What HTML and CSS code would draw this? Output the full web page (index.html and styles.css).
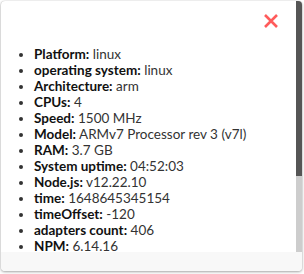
FILE: index.html
```html
<!DOCTYPE html>
<html>
<head>
<meta charset="utf-8">
<link rel="stylesheet" href="styles.css">
</head>
<body>
<div class="dialog">
  <div class="body">
    <div class="content">
      <div class="head">
        <button class="close" aria-label="close">
          <svg width="16" height="16" viewBox="0 0 16 16"><path d="M2 2L14 14M14 2L2 14" stroke="#ff5b5b" stroke-width="2.6" stroke-linecap="butt"/></svg>
        </button>
      </div>
      <ul class="info">
        <li><b>Platform:</b> linux</li>
        <li><b>operating system:</b> linux</li>
        <li><b>Architecture:</b> arm</li>
        <li><b>CPUs:</b> 4</li>
        <li><b>Speed:</b> 1500 MHz</li>
        <li><b>Model:</b> ARMv7 Processor rev 3 (v7l)</li>
        <li><b>RAM:</b> 3.7 GB</li>
        <li><b>System uptime:</b> 04:52:03</li>
        <li><b>Node.js:</b> v12.22.10</li>
        <li><b>time:</b> 1648645345154</li>
        <li><b>timeOffset:</b> -120</li>
        <li><b>adapters count:</b> 406</li>
        <li><b>NPM:</b> 6.14.16</li>
      </ul>
    </div>
    <div class="scrollbar"><div class="thumb"></div></div>
  </div>
  <div class="footer"></div>
</div>
</body>
</html>
```
FILE: styles.css
```css
html, body {
  margin: 0;
  padding: 0;
  background: #ffffff;
}
body {
  width: 304px;
  height: 274px;
  overflow: hidden;
  font-family: "Lato", "Noto Sans", sans-serif;
  font-size: 13.5px;
  color: #333;
}
.dialog {
  margin: 1px 0 0 1px;
  width: 301px;
  height: 270px;
  background: #fff;
  border-radius: 4px;
  box-shadow: 0 1px 3px rgba(0,0,0,0.35), 0 0 1px rgba(0,0,0,0.25);
  display: flex;
  flex-direction: column;
  overflow: hidden;
}
.body {
  position: relative;
  height: 251px;
  flex: none;
  overflow: hidden;
}
.content {
  height: 100%;
  overflow: hidden;
}
.scrollbar {
  position: absolute;
  top: 0;
  right: 0;
  width: 6px;
  height: 100%;
  background: #cdcdcd;
}
.thumb {
  height: 175px;
  background: #555555;
}
.head {
  height: 45px;
  display: flex;
  justify-content: flex-end;
  align-items: flex-start;
}
.close {
  margin: 12px 23px 0 0;
  padding: 0;
  border: 0;
  background: none;
  width: 16px;
  height: 16px;
  display: flex;
}
.info {
  margin: 0;
  padding-left: 33px;
  line-height: 16px;
}
.info b {
  color: #111;
  font-weight: 700;
}
.footer {
  flex: 1;
  background: #f8f8f8;
}
```
